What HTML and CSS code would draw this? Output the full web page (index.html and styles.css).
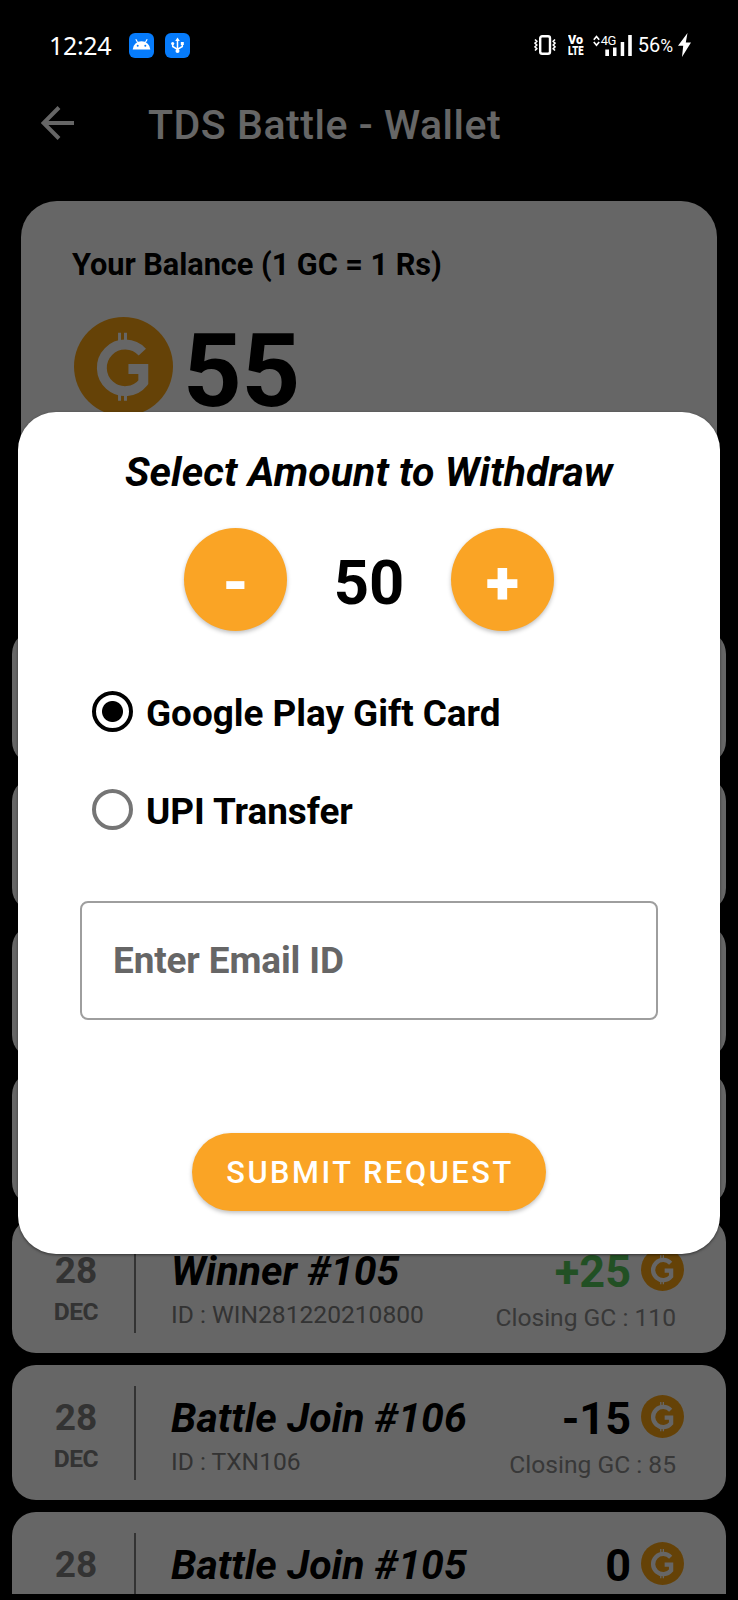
FILE: index.html
```
<!DOCTYPE html>
<html lang="en">
<head>
<meta charset="utf-8">
<title>TDS Battle - Wallet</title>
<link rel="stylesheet" href="styles.css">
</head>
<body>
<svg class="defs" aria-hidden="true">
  <symbol id="coin" viewBox="0 0 100 100">
    <circle cx="50" cy="50" r="50" fill="currentColor"/>
    <path d="M69 35.500A23.500 23.500 0 1 0 70 66V52.500H55" fill="none" stroke="#fff" stroke-width="10"/>
    <path d="M46 25V16M52 25V16M46 84.500V76M52 84.500V76" fill="none" stroke="#fff" stroke-width="3"/>
  </symbol>
</svg>
<div class="screen">
  <header class="statusbar">
    <div class="status-left">
      <span class="clock">12:24</span>
      <svg class="badge" viewBox="0 0 25 25"><rect width="25" height="25" rx="6" fill="#067bfb"/><path d="M3.700 16.500a8.800 8.300 0 0 1 17.600 0z" fill="#fff"/><path d="M8.800 9.800L6.800 6.300M16.200 9.800l2-3.500" stroke="#fff" stroke-width="1.200"/><circle cx="8.700" cy="12.800" r="1" fill="#067bfb"/><circle cx="16.300" cy="12.800" r="1" fill="#067bfb"/></svg>
      <svg class="badge" viewBox="0 0 25 25"><rect width="25" height="25" rx="6" fill="#067bfb"/><path d="M12.500 18V7M7.700 10.500v3l4.800 2.800 4.800-2.800v-3" fill="none" stroke="#fff" stroke-width="1.500"/><path d="M12.500 4.500l2.300 3.500h-4.600z" fill="#fff"/><circle cx="12.500" cy="18" r="2" fill="#fff"/><circle cx="7.700" cy="10.500" r="1.600" fill="#fff"/><path d="M15.800 9h3v3h-3z" fill="#fff"/></svg>
    </div>
    <div class="status-right">
      <svg class="vibrate" viewBox="0 0 22 20"><rect x="6.200" y="1.200" width="9.800" height="17.600" rx="2" fill="none" stroke="#fff" stroke-width="2.400"/><path d="M1 4.500l1.800 1.800L1 8.200 2.800 10 1 11.800l1.800 1.900L1 15.500M21 4.500l-1.800 1.800L21 8.200 19.200 10l1.800 1.800-1.800 1.900 1.800 1.800" fill="none" stroke="#fff" stroke-width="1.600"/></svg>
      <svg class="volte" viewBox="0 0 16 22"><g fill="#fff" font-family="Roboto, sans-serif" font-size="13.500" font-weight="900"><text x="0" y="9.800" textLength="15" lengthAdjust="spacingAndGlyphs">Vo</text><text x="0" y="21" textLength="15.500" lengthAdjust="spacingAndGlyphs">LTE</text></g></svg>
      <span class="network">
        <svg class="signal" viewBox="0 0 39 21"><path d="M.8 4.700L3.500 1.500l2.700 3.200M.8 7L3.500 10.200 6.200 7" fill="none" stroke="#fff" stroke-width="1.700"/><path d="M12.300 14.500H16V21h-3.700zM20 12.500h3.500V21H20zM27.700 7h3.500v14h-3.500zM35.200 0h3.600v21h-3.600z" fill="#fff"/></svg>
        <span class="gen">4G</span>
      </span>
      <span class="percent">56<small>%</small></span>
      <svg class="bolt" viewBox="0 0 13 24"><path d="M9.500 0L0 12.800h5.200L4 24l9-14.500H7.800z" fill="#fff"/></svg>
    </div>
  </header>

  <div class="toolbar">
    <svg class="back" viewBox="0 0 34 34"><path d="M33 17H3M18 1.500L2.500 17 18 32.500" fill="none" stroke="#fff" stroke-width="4"/></svg>
    <h1>TDS Battle - Wallet</h1>
  </div>

  <section class="balance">
    <p>Your Balance (1 GC = 1 Rs)</p>
    <div class="balance-row"><svg class="coin-lg"><use href="#coin"/></svg><strong>55</strong></div>
  </section>

  <ul class="history">
    <li class="entry"></li>
    <li class="entry"></li>
    <li class="entry"></li>
    <li class="entry"></li>
    <li class="entry">
      <div class="date"><b>28</b><span>DEC</span></div>
      <div class="info"><em>Winner #105</em><span>ID : WIN281220210800</span></div>
      <div class="amount"><div class="value gain">+25<svg class="coin-sm"><use href="#coin"/></svg></div><span>Closing GC : 110</span></div>
    </li>
    <li class="entry">
      <div class="date"><b>28</b><span>DEC</span></div>
      <div class="info"><em>Battle Join #106</em><span>ID : TXN106</span></div>
      <div class="amount"><div class="value">-15<svg class="coin-sm"><use href="#coin"/></svg></div><span>Closing GC : 85</span></div>
    </li>
    <li class="entry">
      <div class="date"><b>28</b></div>
      <div class="info"><em>Battle Join #105</em></div>
      <div class="amount"><div class="value">0<svg class="coin-sm"><use href="#coin"/></svg></div></div>
    </li>
  </ul>
  <div class="navbar"></div>

  <div class="scrim">
    <div class="dialog">
      <h2>Select Amount to Withdraw</h2>
      <div class="stepper">
        <button class="round">-</button>
        <span class="count">50</span>
        <button class="round">+</button>
      </div>
      <div class="option"><span class="radio checked"></span><span>Google Play Gift Card</span></div>
      <div class="option"><span class="radio"></span><span>UPI Transfer</span></div>
      <div class="field">Enter Email ID</div>
      <button class="submit">SUBMIT REQUEST</button>
    </div>
  </div>
</div>
</body>
</html>
```

FILE: styles.css
```
* { box-sizing: border-box; margin: 0; padding: 0; }
body { background: #000; font-family: Roboto, sans-serif; }
.defs { position: absolute; width: 0; height: 0; }
.screen { position: relative; width: 738px; height: 1600px; overflow: hidden; background: #000; display: flex; flex-direction: column; }

.statusbar { position: relative; z-index: 2; flex: none; height: 90px; display: flex; justify-content: space-between; padding: 0 47px 0 49px; color: #fff; }
.status-left { display: flex; align-items: center; }
.clock { width: 80px; font: 25px/30px "Noto Sans", sans-serif; letter-spacing: -0.350px; white-space: nowrap; }
.badge { width: 25px; height: 25px; margin-right: 11px; }
.status-right { display: flex; align-items: center; }
.vibrate { width: 22px; height: 20px; margin-right: 12px; }
.volte { width: 16px; height: 22px; margin-right: 9px; }
.network { position: relative; width: 39px; height: 21px; margin-right: 6px; }
.signal { width: 39px; height: 21px; display: block; }
.gen { position: absolute; left: 8px; top: -1px; font: 13px/13px Roboto, sans-serif; letter-spacing: -0.400px; }
.percent { font: 20px/24px Roboto, sans-serif; white-space: nowrap; }
.percent small { font-size: 17.500px; }
.bolt { width: 13px; height: 24px; margin-left: 5px; }

.toolbar { flex: none; height: 111px; display: flex; align-items: flex-start; padding: 17px 0 0 41px; color: #fff; }
.back { width: 34px; height: 34px; margin: -1px 73px 0 0; }
h1 { font-size: 41px; line-height: 36px; font-weight: 500; letter-spacing: 0.550px; white-space: nowrap; }

.balance { flex: none; height: 417px; margin: 0 21px; padding: 46px 51px; border-radius: 36px; background: #fff; }
.balance p { font-size: 30.750px; line-height: 36px; font-weight: 700; letter-spacing: -0.060px; white-space: nowrap; }
.balance-row { display: flex; align-items: center; margin-top: 35px; }
.coin-lg { width: 99px; height: 99px; margin: -7px 10px 0 2px; color: #fca513; }
.balance-row strong { font-size: 102.500px; line-height: 99px; padding-top: 4px; letter-spacing: -0.400px; }

.history { flex: none; list-style: none; height: 964px; overflow: hidden; margin: 12px 12px 0; display: flex; flex-direction: column; gap: 12px; }
.entry { flex: none; height: 135px; border-radius: 24px; background: #fff; display: flex; padding: 21px 42px 20px 0; }
.date { width: 124px; height: 94px; display: flex; flex-direction: column; align-items: center; padding: 10px 0 0 6px; color: #808080; border-right: 2px solid #808080; }
.entry:empty { padding: 0; }
.date b { font-size: 37px; line-height: 44px; }
.date span { font-size: 24.600px; line-height: 30px; font-weight: 700; margin-top: 4px; letter-spacing: -0.500px; }
.info { flex: 1; padding: 8px 0 0 35px; display: flex; flex-direction: column; white-space: nowrap; }
.info em { font-size: 41px; line-height: 48px; font-weight: 700; letter-spacing: 0.030px; }
.info span { font-size: 24.600px; line-height: 30px; color: #808080; margin-top: 5px; }
.amount { display: flex; flex-direction: column; align-items: flex-end; white-space: nowrap; padding-top: 8px; }
.value { display: flex; align-items: center; height: 48px; font-size: 45px; font-weight: 700; }
.gain { color: #55c85a; }
.coin-sm { width: 43px; height: 43px; margin: -4px 0 0 10px; color: #fca513; }
.amount span { font-size: 24.600px; line-height: 30px; color: #8c8c8c; margin: 8px 8px 0 0; }
.navbar { flex: none; height: 6px; background: #000; }

.scrim { position: absolute; inset: 0; z-index: 1; background: rgba(0,0,0,.6); padding: 412px 18px 0; }
.dialog { height: 842px; border-radius: 38px; background: #fff; display: flex; flex-direction: column; padding: 36px 62px 0; box-shadow: 0 1px 3px rgba(0,0,0,.5); }
h2 { font-size: 41px; line-height: 48px; font-weight: 700; font-style: italic; letter-spacing: 0.060px; text-align: center; white-space: nowrap; }
.stepper { display: flex; justify-content: center; align-items: center; margin-top: 32px; }
button { border: 0; background: #faa425; color: #fff; font-family: Roboto, sans-serif; box-shadow: 0 2px 4px rgba(0,0,0,.25); }
.round { width: 103px; height: 103px; border-radius: 50%; font-size: 61.500px; font-weight: 900; line-height: 103px; padding-top: 4px; }
.count { width: 164px; text-align: center; font-size: 61.500px; line-height: 72px; font-weight: 700; padding-top: 6px; }
.option { display: flex; align-items: center; height: 60px; font-size: 36.900px; font-weight: 700; padding-left: 12px; gap: 13px; white-space: nowrap; margin-top: 38px; letter-spacing: -0.030px; }
.stepper + .option { margin-top: 52px; }
.radio { width: 41px; height: 41px; border: 4px solid #757575; border-radius: 50%; margin-top: -3px; }
.radio.checked { border-color: #000; background: radial-gradient(circle, #000 10px, #fff 11px); }
.field { height: 119px; border: 2px solid #9e9e9e; border-radius: 8px; margin-top: 60px; padding: 0 31px; font-size: 36.900px; font-weight: 700; line-height: 116px; color: #666; letter-spacing: -0.120px; }
.submit { align-self: center; width: 354px; height: 78px; border-radius: 39px; margin-top: 113px; padding: 1px 0 0 2px; font-size: 30.750px; font-weight: 500; letter-spacing: 2.550px; }
```
